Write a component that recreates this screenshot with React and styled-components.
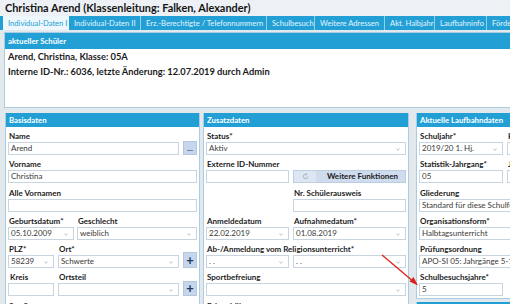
import React from 'react';
import styled, { createGlobalStyle } from 'styled-components';

const FONT = `Lato, "Noto Sans", "DejaVu Sans", sans-serif`;
const BLUE = '#22a0d6';

const Global = createGlobalStyle`
  html, body { margin: 0; padding: 0; }
  body {
    width: 510px; height: 304px; overflow: hidden;
    background: #e3e8ed; font-family: ${FONT}; color: #1b1b1b;
  }
  * { box-sizing: border-box; }
`;

const Page = styled.div`
  width: 510px; height: 304px; overflow: hidden; position: relative;
  display: flex; flex-direction: column;
  & > * { flex-shrink: 0; }
`;

const TitleBar = styled.div`
  height: 16px; background: #edf1f6; padding-left: 5px;
  font-weight: 700; font-size: 10.9px; line-height: 16px; white-space: nowrap;
  color: #151515;
`;

const TabBar = styled.div`
  height: 14px; background: ${BLUE}; display: flex; padding-left: 3px;
  white-space: nowrap; overflow: hidden;
`;

const Tab = styled.div`
  flex: 0 0 ${p => p.$w}px; padding-left: 5px;
  font-size: 7.6px; line-height: 14px;
  color: ${p => (p.$active ? BLUE : '#e4f4fc')};
  background: ${p => (p.$active ? '#eef7fc' : 'transparent')};
  border-right: 1px solid rgba(255, 255, 255, 0.5);
`;

const Content = styled.div`
  padding: 2px 0 0 4px; display: flex; flex-direction: column; gap: 5px;
  & > * { flex-shrink: 0; }
`;

const TopPanel = styled.section`
  height: 76px; border: 1px solid #a9cde2; border-right: none; background: #fff;
`;

const PanelHeader = styled.div`
  height: ${p => p.$h}px; background: ${BLUE}; color: #fff; font-weight: 700;
  font-size: 7.8px; line-height: ${p => p.$h}px; padding-left: ${p => p.$pl}px;
  white-space: nowrap;
`;

const InfoLine = styled.div`
  font-weight: 700; font-size: 9.3px; line-height: 15px; padding-left: 3px;
  white-space: nowrap;
`;

const Columns = styled.div`
  display: grid; grid-template-columns: 195px 206px 200px; column-gap: 3px;
  padding-left: 1px; align-items: start;
`;

const Stack = styled.div`
  display: flex; flex-direction: column; gap: 3px; margin-left: 4px;
`;

const Panel = styled.section`
  background: #fff; border: 1px solid #a9cde2; border-top: none;
  height: ${p => p.$h}px; overflow: hidden;
`;

const Body = styled.div`
  padding: 4px 2px 0 2px; display: flex; flex-direction: column; gap: ${p => p.$gap}px;
`;

const Row = styled.div`
  display: grid; grid-template-columns: ${p => p.$cols}; column-gap: ${p => p.$gap ?? 4}px;
  align-items: end;
`;

const Field = styled.div`
  display: flex; flex-direction: column; min-width: 0;
`;

const Label = styled.div`
  font-size: 8px; font-weight: 700; line-height: 11px; height: 11px;
  padding-left: ${p => p.$pl ?? 1}px; white-space: nowrap; color: #1c1c1c;
`;

const Input = styled.div`
  height: 13px; border: 1px solid #c8d5e0; background: #fff;
  font-size: 8px; line-height: 11px; padding: 0 2px; color: #3a3a3a;
  position: relative; white-space: nowrap; overflow: hidden;
`;

const Caret = styled.svg`
  position: absolute; right: 5px; top: 5px; width: 4px; height: 3px;
`;

const SmallButton = styled.div`
  height: ${p => p.$h}px; width: 14px; background: #c6d7ed; border: 1px solid #b3c7df;
  display: flex; align-items: center; justify-content: center;
  color: #1e3a64; font-weight: 700; font-size: ${p => p.$fs}px; line-height: 1;
`;

const FuncButton = styled.div`
  height: 13px; display: flex; background: #cfdcee; border: 1px solid #bccde2;
`;

const FuncIcon = styled.div`
  width: 22px; background: #dde7f3; display: flex; align-items: center; justify-content: center;
`;

const FuncText = styled.div`
  flex: 1; text-align: center; font-weight: 700; font-size: 8px; line-height: 11px;
  color: #1b1b1b; padding-left: 4px; white-space: nowrap;
`;

const ArrowOverlay = styled.svg`
  position: absolute; left: 0; top: 0; width: 510px; height: 304px; pointer-events: none;
`;

const Select = ({ children }) => (
  <Input>
    {children}
    <Caret viewBox="0 0 4 3">
      <path d="M0.3 0.5 L2 2.3 L3.7 0.5" fill="none" stroke="#a5adb5" strokeWidth="0.8" />
    </Caret>
  </Input>
);

const F = ({ label, children, pl }) => (
  <Field>
    <Label $pl={pl}>{label}</Label>
    {children}
  </Field>
);

const tabs = [
  ['Individual-Daten I', 66, true],
  ['Individual-Daten II', 72],
  ['Erz.-Berechtigte / Telefonnummern', 126],
  ['Schulbesuch', 48],
  ['Weitere Adressen', 70],
  ['Akt. Halbjahr', 50],
  ['Laufbahninfo', 52],
  ['Förderschwerpunkte', 80],
];

export default function App() {
  return (
    <Page>
      <Global />
      <TitleBar>Christina Arend (Klassenleitung: Falken, Alexander)</TitleBar>
      <TabBar>
        {tabs.map(([t, w, a]) => (
          <Tab key={t} $w={w} $active={a}>{t}</Tab>
        ))}
      </TabBar>
      <Content>
        <TopPanel>
          <PanelHeader $h={16} $pl={3}>aktueller Schüler</PanelHeader>
          <InfoLine>Arend, Christina, Klasse: 05A</InfoLine>
          <InfoLine>Interne ID-Nr.: 6036, letzte Änderung: 12.07.2019 durch Admin</InfoLine>
        </TopPanel>
        <Columns>
          <Panel $h={200}>
            <PanelHeader $h={14} $pl={3}>Basisdaten</PanelHeader>
            <Body $gap={4.3}>
              <Row $cols="1fr 14px">
                <F label="Name"><Input>Arend</Input></F>
                <SmallButton $h={14} $fs={8}>...</SmallButton>
              </Row>
              <F label="Vorname"><Input>Christina</Input></F>
              <F label="Alle Vornamen"><Input /></F>
              <Row $cols="66px 1fr" $gap={3}>
                <F label="Geburtsdatum*"><Select>05.10.2009</Select></F>
                <F label="Geschlecht"><Select>weiblich</Select></F>
              </Row>
              <Row $cols="46px 1fr 14px">
                <F label="PLZ*"><Select>58239</Select></F>
                <F label="Ort*"><Select>Schwerte</Select></F>
                <SmallButton $h={16} $fs={13}>+</SmallButton>
              </Row>
              <Row $cols="46px 1fr 14px">
                <F label="Kreis" pl={2}><Input /></F>
                <F label="Ortsteil"><Select /></F>
                <SmallButton $h={15} $fs={13}>+</SmallButton>
              </Row>
              <F label="Straße"><Input /></F>
            </Body>
          </Panel>
          <Panel $h={200}>
            <PanelHeader $h={14} $pl={3}>Zusatzdaten</PanelHeader>
            <Body $gap={4.3}>
              <F label="Status*"><Select>Aktiv</Select></F>
              <Row $cols="83px 1fr">
                <F label="Externe ID-Nummer"><Input /></F>
                <FuncButton>
                  <FuncIcon>
                    <svg width="7" height="7" viewBox="0 0 8 8">
                      <path d="M6.5 4 A2.5 2.5 0 1 1 4 1.5 L5.5 1.5" fill="none" stroke="#9aa6b3" strokeWidth="0.9" />
                      <path d="M4.6 0.5 L5.8 1.5 L4.6 2.5" fill="none" stroke="#9aa6b3" strokeWidth="0.9" />
                    </svg>
                  </FuncIcon>
                  <FuncText>Weitere Funktionen</FuncText>
                </FuncButton>
              </Row>
              <Row $cols="83px 1fr">
                <div />
                <F label="Nr. Schülerausweis"><Input /></F>
              </Row>
              <Row $cols="83px 1fr">
                <F label="Anmeldedatum"><Select>22.02.2019</Select></F>
                <F label="Aufnahmedatum*"><Select>01.08.2019</Select></F>
              </Row>
              <Field>
                <Label>Ab-/Anmeldung vom Religionsunterricht*</Label>
                <Row $cols="83px 1fr">
                  <Select>. .</Select>
                  <Select>. .</Select>
                </Row>
              </Field>
              <F label="Sportbefreiung"><Select /></F>
              <F label="Fahrschüler"><Input /></F>
            </Body>
          </Panel>
          <Stack>
            <Panel $h={186}>
              <PanelHeader $h={14} $pl={3}>Aktuelle Laufbahndaten</PanelHeader>
              <Body $gap={4.3}>
                <Row $cols="84px 1fr">
                  <F label="Schuljahr*"><Select>2019/20 1. Hj.</Select></F>
                  <F label="Klasse*"><Select>05A</Select></F>
                </Row>
                <Row $cols="84px 1fr">
                  <F label="Statistik-Jahrgang*"><Input>05</Input></F>
                  <F label="Jahrgang*"><Select>05</Select></F>
                </Row>
                <F label="Gliederung"><Select>Standard für diese Schulform</Select></F>
                <F label="Organisationsform*"><Select>Halbtagsunterricht</Select></F>
                <F label="Prüfungsordnung"><Select>APO-SI 05: Jahrgänge 5-10</Select></F>
                <Row $cols="84px 1fr">
                  <F label="Schulbesuchsjahre*"><Input>5</Input></F>
                </Row>
              </Body>
            </Panel>
            <Panel $h={40}>
              <PanelHeader $h={14} $pl={3}>Einschulung</PanelHeader>
            </Panel>
          </Stack>
        </Columns>
      </Content>
      <ArrowOverlay viewBox="0 0 510 304">
        <line x1="382" y1="255" x2="414" y2="282" stroke="#dc2218" strokeWidth="1.3" />
        <path d="M418 285.5 L409.5 281.5 L413.5 277 Z" fill="#dc2218" />
      </ArrowOverlay>
    </Page>
  );
}
